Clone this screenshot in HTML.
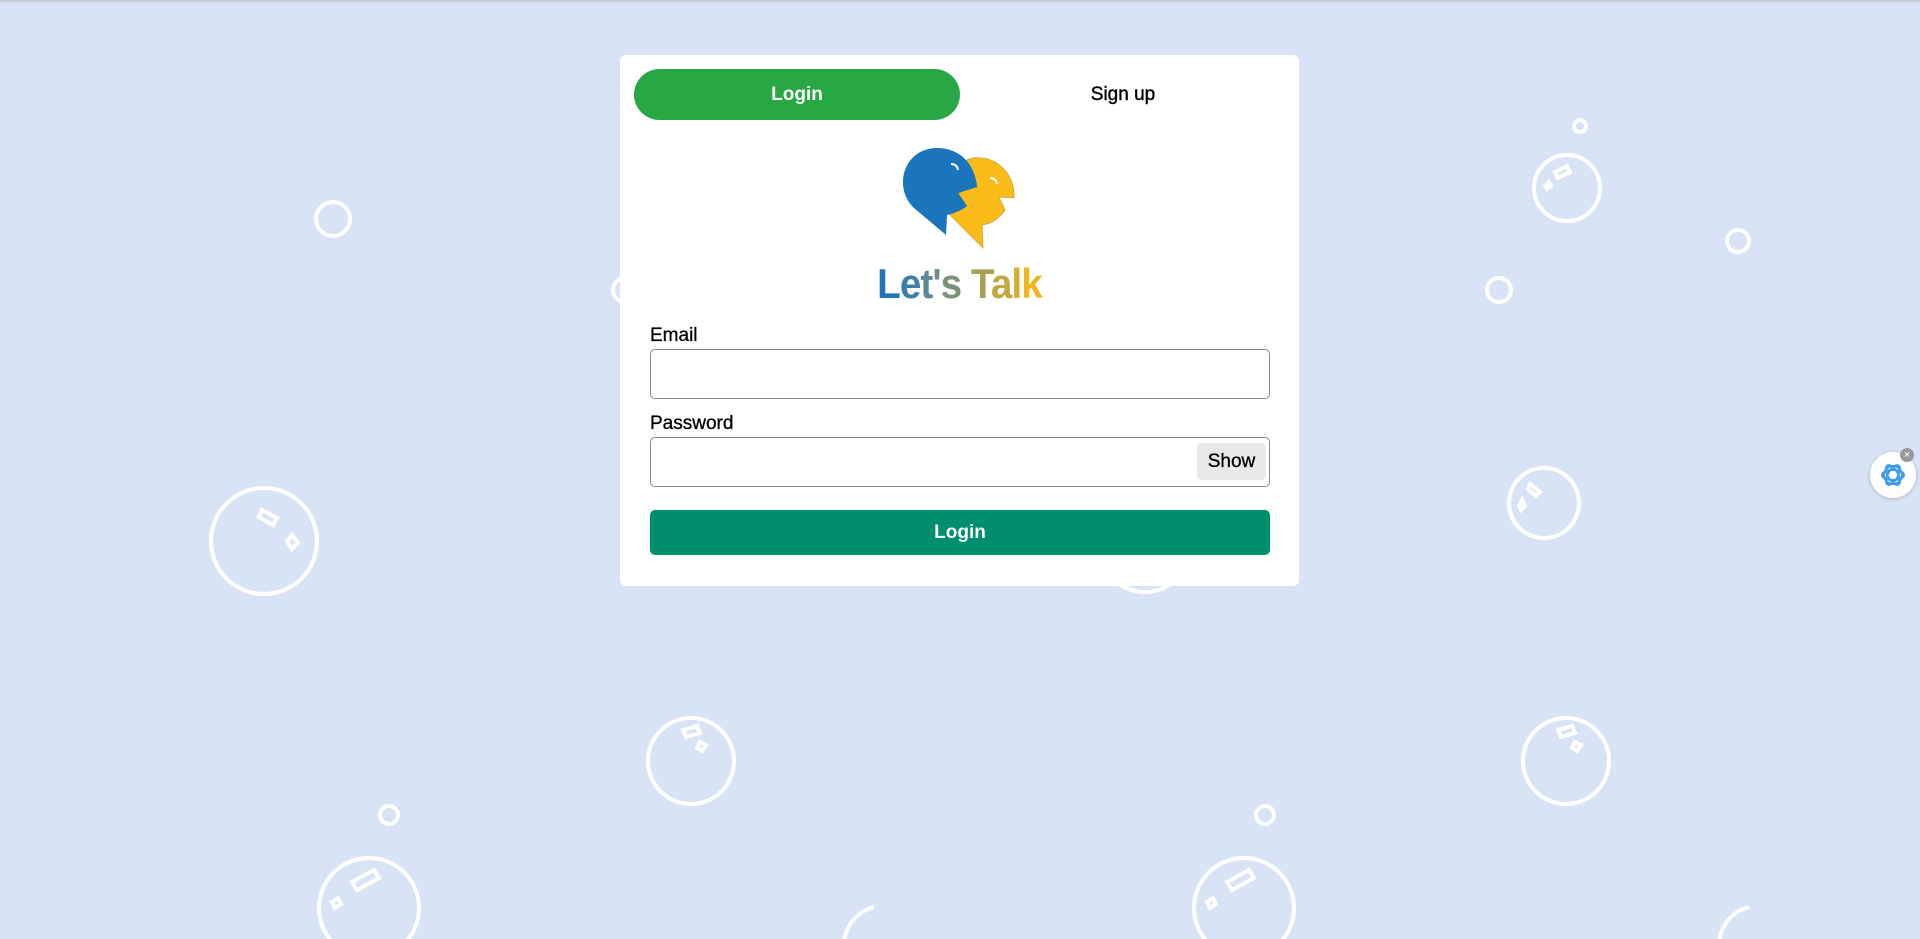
<!DOCTYPE html>
<html><head><meta charset="utf-8"><style>
*{box-sizing:border-box;margin:0;padding:0}
body{width:1920px;height:937px;overflow:hidden;background:#d8e4f5;font-family:"Liberation Sans",Arial,sans-serif;position:relative;border-top:2px solid #c8ccd4}
svg.bg{position:absolute;left:0;top:0}
.card{position:absolute;left:620px;top:53px;width:679px;height:531px;background:#fff;border-radius:6px}
.tab{position:absolute;top:14px;height:51px;width:326px;border-radius:26px;font-size:19px;font-weight:bold;display:flex;align-items:center;justify-content:center}
.t1{left:14px;background:#28a745;color:#fff}
.t2{left:340px;color:#000;font-weight:normal;-webkit-text-stroke:.4px #000}
.title{position:absolute;left:0;width:100%;top:205px;text-align:center;font-size:42px;font-weight:bold;letter-spacing:-1px;transform:scaleX(.92)}
.lbl{position:absolute;left:30px;font-size:19px;color:#000;-webkit-text-stroke:.3px #000}
.inp{position:absolute;left:30px;width:620px;height:50px;border:1px solid #888;border-radius:5px}
.show{position:absolute;right:3px;top:5px;width:69px;height:37px;background:#e8e8e8;border-radius:5px;font-size:19px;display:flex;align-items:center;justify-content:center;-webkit-text-stroke:.3px #000}
.btn{position:absolute;left:30px;top:455px;width:620px;height:45px;background:#008f6e;border-radius:5px;color:#fff;font-size:19px;font-weight:bold;display:flex;align-items:center;justify-content:center}
</style></head><body>
<svg class="bg" width="1920" height="937" fill="none" stroke="#fff" stroke-width="4">
<circle cx="333" cy="217" r="17"/><circle cx="264" cy="539" r="53"/><path d="M262 508 l15 8 -4 7 -14 -8z M292 533 l6 8 -6 6 -5 -8z"/>
<circle cx="1567" cy="186" r="33"/><path d="M1555 170 l12-6 3 6 -12 6z M1545 184 l4-4 2 4 -4 3z"/>
<circle cx="1580" cy="124" r="6"/><circle cx="1738" cy="239" r="11"/><circle cx="1499" cy="288" r="12"/>
<circle cx="1544" cy="501" r="35"/><path d="M1530 482 l10 8 -4 4 -8 -7z M1522 498 l3 6 -4 4 -2-4z"/>
<circle cx="691" cy="759" r="43"/><path d="M683 728 l14-4 3 7-14 4z M700 740 l6 3 -4 6 -5-3z"/>
<circle cx="1566" cy="759" r="43"/><path d="M1558 728 l14-4 3 7-14 4z M1575 740 l6 3 -4 6 -5-3z"/>
<circle cx="389" cy="813" r="9"/><circle cx="1265" cy="813" r="9"/>
<circle cx="369" cy="906" r="50"/><path d="M352 880 l22-12 5 8 -22 12z M332 900 l6-4 3 6 -6 4z"/>
<circle cx="1244" cy="906" r="50"/><path d="M1227 880 l22-12 5 8 -22 12z M1207 900 l6-4 3 6 -6 4z"/>
<path d="M874 905 a40 40 0 0 0 -30 40"/><path d="M1749 905 a40 40 0 0 0 -30 40"/>
<circle cx="1145" cy="545" r="45"/><circle cx="625" cy="288" r="12"/>
</svg>
<div class="card">
<svg style="position:absolute;left:280px;top:85px" width="120" height="115" viewBox="0 0 120 115">
<path d="M60 24 C68 18 76 17 82 18 C100 20 115 36 114 58 L99 57 L105 70 C98 80 90 84 82 85 L83 108 L50 75 C56 72 62 68 67 66 L58 53 L77 47 C77 38 70 28 60 24Z" fill="#fbbc19" stroke="#c9a23a" stroke-width="0.8"/>
<path d="M77 47 C75 22 58 8 37 8 C16 8 3 24 3 42 C3 54 8 62 14 68 L46 95 L47 75 C55 73 62 70 67 66 L58 53 Z" fill="#1b75bc"/>
<path d="M51 24 q6 0 7 6" stroke="#fff" stroke-width="2" fill="none"/><path d="M90 38 q6 0 7 6" stroke="#fff" stroke-width="2" fill="none"/>
</svg>
<div class="tab t1">Login</div><div class="tab t2">Sign up</div>
<div class="title"><span style="color:#1f77bb">L</span><span style="color:#3b80a8">e</span><span style="color:#5a8a96">t</span><span style="color:#6f8e88">'</span><span style="color:#7d927a">s</span> <span style="color:#a9a052">T</span><span style="color:#c2a83f">a</span><span style="color:#d6ad30">l</span><span style="color:#f0b521">k</span></div>
<div class="lbl" style="top:270px">Email</div>
<div class="inp" style="top:294px"></div>
<div class="lbl" style="top:358px">Password</div>
<div class="inp" style="top:382px"><div class="show">Show</div></div>
<div class="btn">Login</div>
</div>
<div style="position:absolute;left:1870px;top:450px;width:46px;height:46px;border-radius:50%;background:#fff;box-shadow:0 1px 4px rgba(0,0,0,.2)">
<svg width="46" height="46" viewBox="0 0 46 46"><g stroke="#3d9be9" stroke-width="2" fill="none"><circle cx="23" cy="23" r="9"/><ellipse cx="23" cy="23" rx="11" ry="5"/><ellipse cx="23" cy="23" rx="11" ry="5" transform="rotate(60 23 23)"/><ellipse cx="23" cy="23" rx="11" ry="5" transform="rotate(120 23 23)"/></g></svg>
<div style="position:absolute;left:30px;top:-4px;width:14px;height:14px;border-radius:50%;background:#999;color:#fff;font-size:11px;line-height:14px;text-align:center">×</div>
</div>
</body></html>
